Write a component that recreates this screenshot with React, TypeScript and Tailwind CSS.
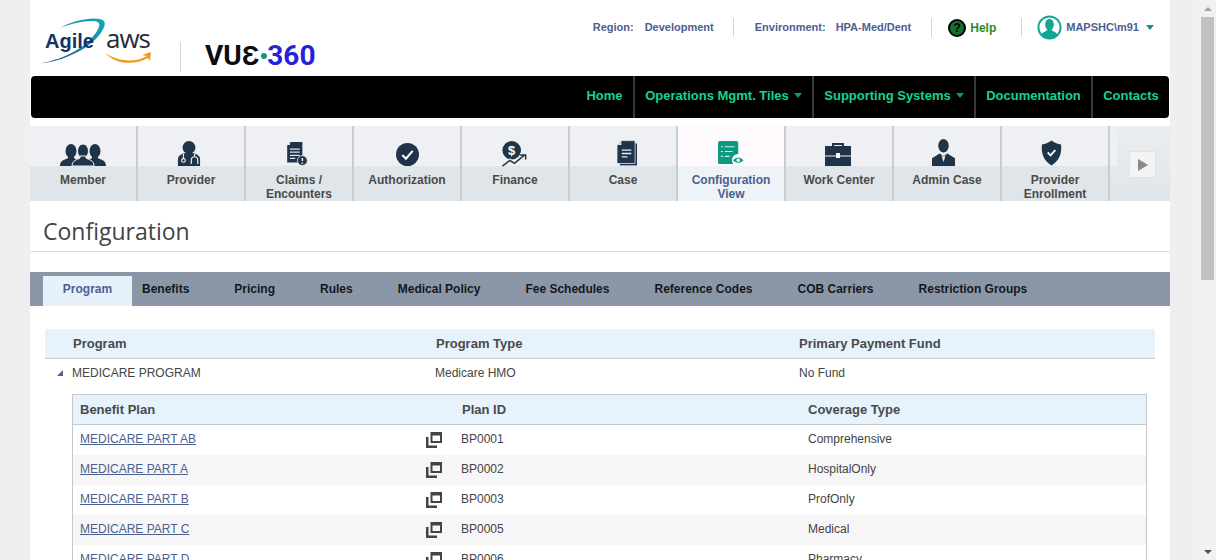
const ARIAL = "font-['Liberation_Sans',Arial,sans-serif]";

function MemberIcon() {
  const person = (x: number, s: number) => (
    <g transform={`translate(${x} 0) scale(${s})`}>
      <ellipse cx="0" cy="7" rx="5.5" ry="7" />
      <path d="M-3 12 L-3 14 C-6 16 -11 16 -11 22 L11 22 C11 16 6 16 3 14 L3 12 Z" />
    </g>
  );
  return (
    <svg width="46" height="22" viewBox="0 0 46 22" fill="#1f3349">
      {person(11, 1)}
      {person(35, 1)}
      <g stroke="#eef0f3" strokeWidth="1">{person(23, 1)}</g>
    </svg>
  );
}

function ProviderIcon() {
  return (
    <svg width="24" height="25" viewBox="0 0 26 27">
      <circle cx="13" cy="7" r="7" fill="#1f3349" />
      <path d="M1 27 V20 C1 15 6 13 13 13 C20 13 25 15 25 20 V27 Z" fill="#1f3349" />
      <circle cx="7" cy="21" r="2" fill="none" stroke="#eef0f3" strokeWidth="1.3" />
      <path d="M7 19 V14 M19 14 V17 M15.5 25 V20.5 A3.5 3.5 0 0 1 22.5 20.5 V25" fill="none" stroke="#eef0f3" strokeWidth="1.3" />
    </svg>
  );
}

function ClaimsIcon() {
  return (
    <svg width="22" height="25" viewBox="0 0 24 28">
      <path d="M5 1 H18 V24 H1 V5 Z" fill="#1f3349" />
      <path d="M4 4.5 H1.5 L4.5 1.5 Z" fill="#eef0f3" />
      <path d="M4 9 H15 M4 12.5 H15 M4 16 H15 M4 19.5 H10" stroke="#dfe6ea" strokeWidth="1.4" />
      <circle cx="18" cy="22" r="5.5" fill="#1f3349" stroke="#dfe6ea" />
      <path d="M18 19 V22.5 M18 24 V25.5" stroke="#fff" strokeWidth="1.6" />
    </svg>
  );
}

function AuthIcon() {
  return (
    <svg width="23" height="23" viewBox="0 0 22 22">
      <circle cx="11" cy="11" r="11" fill="#1f3349" />
      <path d="M6 11.5 L9.5 15 L16 7.5" fill="none" stroke="#fff" strokeWidth="2" />
    </svg>
  );
}

function FinanceIcon() {
  return (
    <svg width="27" height="26" viewBox="0 0 28 28" className="-mb-px">
      <circle cx="11" cy="10" r="10" fill="#1f3349" />
      <text x="11" y="15" textAnchor="middle" fontSize="14" fontWeight="700" fill="#fff" fontFamily="Liberation Sans">$</text>
      <path d="M1 27 L9 21 L14 24 L25 15 M20 15 H26 V20" fill="none" stroke="#eef0f3" strokeWidth="4" />
      <path d="M1 27 L9 21 L14 24 L25 15 M20 15 H26 V20" fill="none" stroke="#1f3349" strokeWidth="1.6" />
    </svg>
  );
}

function CaseIcon() {
  return (
    <svg width="20" height="26" viewBox="0 0 21 26">
      <path d="M3 3 H21 V26 H3 Z" fill="#1f3349" />
      <path d="M5 0 H19 V24 H0 V5 Z" fill="#1f3349" stroke="#eef0f3" strokeWidth="0.8" />
      <path d="M4.5 4.5 H1 L4.5 1 Z" fill="#eef0f3" />
      <path d="M5 10 H15 M5 13.5 H15 M5 17 H11" stroke="#e8edf0" strokeWidth="1.4" />
    </svg>
  );
}

function ConfigIcon() {
  return (
    <svg width="27" height="25" viewBox="0 0 28 26">
      <rect x="0" y="0" width="21" height="24" rx="2" fill="#0b9a7f" />
      <path d="M3 6 H5 M7 6 H17 M3 11 H5 M7 11 H15 M3 16 H5 M7 16 H12" stroke="#d7f0ea" strokeWidth="1.1" />
      <circle cx="21" cy="20" r="6.5" fill="#fdf9fd" />
      <path d="M15.5 20 Q21 14.5 26.5 20 Q21 25.5 15.5 20 Z" fill="#0b9a7f" />
      <circle cx="21" cy="20" r="1.8" fill="#fff" />
    </svg>
  );
}

function WorkIcon() {
  return (
    <svg width="26" height="24" viewBox="0 0 26 24">
      <path d="M8 5 V2 H18 V5" fill="none" stroke="#1f3349" strokeWidth="2" />
      <rect x="0" y="4" width="26" height="9.5" fill="#1f3349" />
      <rect x="0" y="14.5" width="26" height="9.5" fill="#1f3349" />
      <rect x="11" y="11" width="4" height="5" fill="#fff" />
    </svg>
  );
}

function AdminIcon() {
  return (
    <svg width="23" height="27" viewBox="0 0 24 28">
      <ellipse cx="12" cy="7" rx="5.5" ry="7" fill="#1f3349" />
      <path d="M8 15 L0 20 V28 H24 V20 L16 15 L12 18 Z" fill="#1f3349" />
      <path d="M10 16.5 L12 18.5 L14 16.5 L13 21 L12 24 L11 21 Z" fill="#eef0f3" />
    </svg>
  );
}

function ShieldIcon() {
  return (
    <svg width="21" height="26" viewBox="0 0 22 26">
      <path d="M11 0 C14 2.5 18 4 21 4 C22 14 19 21 11 26 C3 21 0 14 1 4 C4 4 8 2.5 11 0 Z" fill="#1f3349" />
      <path d="M7 12.5 L10 15.5 L15 10" fill="none" stroke="#fff" strokeWidth="2" />
    </svg>
  );
}

function CopyIcon() {
  return (
    <svg width="16" height="16" viewBox="0 0 16 16" className="mt-[2px] shrink-0">
      <path d="M4.5 0 H16 V11 H4.5 Z M6.5 3.5 V9 H14 V3.5 Z" fill="#444" fillRule="evenodd" />
      <path d="M0 5 H2.5 V13.5 H11 V16 H0 Z" fill="#444" />
    </svg>
  );
}

const tiles = [
  { label: "Member", icon: <MemberIcon />, shift: "" },
  { label: "Provider", icon: <ProviderIcon />, shift: "pr-[4px]" },
  { label: "Claims / Encounters", icon: <ClaimsIcon />, shift: "pr-[4px]" },
  { label: "Authorization", icon: <AuthIcon />, shift: "" },
  { label: "Finance", icon: <FinanceIcon />, shift: "pr-[2px]" },
  { label: "Case", icon: <CaseIcon />, shift: "pl-[7px]" },
  { label: "Configuration View", icon: <ConfigIcon />, shift: "", active: true },
  { label: "Work Center", icon: <WorkIcon />, shift: "pr-[2px]" },
  { label: "Admin Case", icon: <AdminIcon />, shift: "pr-[7px]" },
  { label: "Provider Enrollment", icon: <ShieldIcon />, shift: "pr-[7px]" },
];

const tabs = [
  "Benefits",
  "Pricing",
  "Rules",
  "Medical Policy",
  "Fee Schedules",
  "Reference Codes",
  "COB Carriers",
  "Restriction Groups",
];

const plans = [
  ["MEDICARE PART AB", "BP0001", "Comprehensive"],
  ["MEDICARE PART A", "BP0002", "HospitalOnly"],
  ["MEDICARE PART B", "BP0003", "ProfOnly"],
  ["MEDICARE PART C", "BP0005", "Medical"],
  ["MEDICARE PART D", "BP0006", "Pharmacy"],
];

function Caret({ color }: { color: string }) {
  return (
    <svg width="8" height="5" viewBox="0 0 8 5" className="shrink-0">
      <path d="M0 0 H8 L4 5 Z" fill={color} />
    </svg>
  );
}

function Header() {
  return (
    <div className="flex h-[76px] items-start">
      <div className="relative ml-[10px] mt-[18px] h-[48px] w-[112px] shrink-0">
        <svg width="68" height="46" viewBox="0 0 68 46" className="absolute left-0 top-0">
          <defs>
            <linearGradient id="swoosh" x1="0" y1="1" x2="1" y2="0">
              <stop offset="0" stopColor="#12447a" />
              <stop offset="0.6" stopColor="#128fa8" />
              <stop offset="1" stopColor="#12a8b8" />
            </linearGradient>
          </defs>
          <path d="M20 10 C32 3 50 -1 60 1 C66 2 66 7 62 13 C54 27 30 42 0 45.5 C26 41 48 28 57 13 C61 6 60 3 52 3 C42 3 30 6 20 10 Z" fill="url(#swoosh)" />
        </svg>
        <span className="absolute left-[5px] top-[11px] text-[20px] font-bold leading-6 text-[#15316b]">Agile</span>
        <span className="absolute left-[66px] top-[8px] font-['Open_Sans',sans-serif] text-[26px] leading-6 tracking-[-1px] text-[#2b2b33]">aws</span>
        <svg width="46" height="12" viewBox="0 0 46 12" className="absolute left-[65px] top-[34px]">
          <path d="M0 1 C10 8 28 12 42 4 L37 3 L46 0 L45 9 L43 6 C28 14 10 12 0 1 Z" fill="#f4991d" />
        </svg>
      </div>
      <div className="ml-[28px] mt-[42px] h-[30px] w-px bg-[#d4d4d4]" />
      <div className="ml-[24px] mt-[40px] flex items-center font-['Roboto',sans-serif] text-[28px] font-bold leading-8">
        <span className="text-[#0b0b10]">VU&#x190;</span>
        <span className="ml-[2px] size-[6px] rounded-full bg-[#12957f]" />
        <span className="text-[#2323d8]">360</span>
      </div>
      <div className="ml-auto mr-[16px] mt-[15px] flex items-center text-[11px] font-bold text-[#4c6090]">
        <span>Region:</span>
        <span className="ml-[11px]">Development</span>
        <div className="ml-[19px] h-[19px] w-px bg-[#d4d4d4]" />
        <span className="ml-[21px]">Environment:</span>
        <span className="ml-[10px]">HPA-Med/Dent</span>
        <div className="ml-[20px] h-[19px] w-px bg-[#d4d4d4]" />
        <div className="ml-[16px] flex size-[18px] items-center justify-center rounded-full border-2 border-black bg-[#13702d] text-[12px] text-black">?</div>
        <span className="ml-[4px] text-[12px] text-[#2a8a25]">Help</span>
        <div className="ml-[25px] h-[19px] w-px bg-[#d4d4d4]" />
        <svg width="25" height="25" viewBox="0 0 26 26" className="ml-[15px]">
          <circle cx="13" cy="13" r="11.5" fill="#fff" stroke="#12a594" strokeWidth="2" />
          <ellipse cx="13" cy="10" rx="4.5" ry="6" fill="#12a594" />
          <path d="M4.5 21 C6 17 10 17 11 15 H15 C16 17 20 17 21.5 21 C17 25 9 25 4.5 21 Z" fill="#12a594" />
        </svg>
        <span className="ml-[4px] text-[#4c6090]">MAPSHC\m91</span>
        <span className="ml-[7px]"><Caret color="#12957f" /></span>
      </div>
    </div>
  );
}

function NavBar() {
  const items = [
    { label: "Home", width: "w-[57px]" },
    { label: "Operations Mgmt. Tiles", caret: true, width: "w-[179px]" },
    { label: "Supporting Systems", caret: true, width: "w-[162px]" },
    { label: "Documentation", width: "w-[117px]" },
    { label: "Contacts", width: "w-[78px]" },
  ];
  return (
    <div className="ml-px mr-px flex h-[42px] items-stretch justify-end rounded-[4px] bg-black">
      {items.map((item, i) => (
        <div
          key={item.label}
          className={`flex items-center justify-center gap-[5px] pb-[3px] text-[13px] font-bold text-[#12d58c] ${item.width} ${i > 0 ? "border-l-2 border-[#3a3a3a]" : ""}`}
        >
          {item.label}
          {item.caret && <Caret color="#0f9c6b" />}
        </div>
      ))}
    </div>
  );
}

function TileRow() {
  return (
    <div className="mt-[8px] flex h-[75px] bg-[#dfe5e9]">
      {tiles.map((tile) => (
        <div
          key={tile.label}
          className={`relative flex shrink-0 flex-col items-center border-r-2 border-[#c9cdd0] ${tile.active ? "-ml-[2px] w-[110px] border-l-2 bg-[#eef3f7]" : "w-[108px]"}`}
        >
          <div className={`flex h-[40px] w-full items-end justify-center ${tile.shift} ${tile.active ? "bg-[#fdf9fd]" : "bg-[#eef0f3]"}`}>
            {tile.icon}
          </div>
          <div className={`mt-[8px] w-[100px] text-center text-[12px] font-bold leading-[13.5px] ${tile.active ? "text-[#4c6090]" : "text-[#4a4a4a]"}`}>
            {tile.label}
          </div>
        </div>
      ))}
      <div className="relative flex flex-1 items-start bg-linear-to-b from-[#ebeef0] to-[#dfe5e9]">
        <div className="h-[40px] w-[7px] bg-[#eef0f3]" />
        <div className="absolute left-[19px] top-[25px] flex size-[27px] items-center justify-center border border-[#dfe3e6] bg-[#f3f3f3]">
          <svg width="10" height="12" viewBox="0 0 10 12"><path d="M0 0 L10 6 L0 12 Z" fill="#8a8a8a" /></svg>
        </div>
      </div>
    </div>
  );
}

function Tabs() {
  return (
    <div className="mt-[20px] flex h-[34px] items-end bg-[#8b97a6] pl-[13px]">
      <div className="flex h-[30px] w-[89px] items-center justify-center bg-[#e6f1fb] pb-[5px] text-[12px] font-bold text-[#4c6090]">
        Program
      </div>
      <div className="ml-[10px] flex h-[30px] items-center gap-[45px] pb-[5px] text-[12px] font-bold whitespace-nowrap text-[#14171c]">
        {tabs.map((tab) => (
          <span key={tab}>{tab}</span>
        ))}
      </div>
    </div>
  );
}

function ProgramTable() {
  return (
    <div className="mx-[15px] mt-[23px]">
      <div className="flex h-[30px] items-center border-b border-[#c9ccd0] bg-[#e6f2fc] text-[13px] font-bold text-[#4a4a4a]">
        <span className="ml-[28px] w-[363px]">Program</span>
        <span className="w-[363px]">Program Type</span>
        <span>Primary Payment Fund</span>
      </div>
      <div className="flex h-[28px] items-center text-[12px] text-[#444]">
        <svg width="6" height="6" viewBox="0 0 6 6" className="ml-[12px]"><path d="M6 0 V6 H0 Z" fill="#4c6090" /></svg>
        <span className="ml-[9px] w-[363px]">MEDICARE PROGRAM</span>
        <span className="w-[364px]">Medicare HMO</span>
        <span>No Fund</span>
      </div>
      <div className="ml-[27px] mr-[8px] mt-[7px] border-x border-t border-[#c3c9d0]">
        <div className="flex h-[30px] items-center border-b border-[#c3c9d0] bg-[#e6f2fc] text-[13px] font-bold text-[#4a4a4a]">
          <span className="ml-[7px] w-[382px]">Benefit Plan</span>
          <span className="w-[346px]">Plan ID</span>
          <span>Coverage Type</span>
        </div>
        {plans.map((plan, i) => (
          <div key={plan[0]} className={`flex h-[30px] items-center pb-[2px] text-[12px] text-[#444] ${i % 2 ? "bg-[#f6f6f6]" : "bg-white"}`}>
            <a className="ml-[7px] w-[346px] text-[#4c6090] underline">{plan[0]}</a>
            <CopyIcon />
            <span className="ml-[19px] w-[347px]">{plan[1]}</span>
            <span>{plan[2]}</span>
          </div>
        ))}
      </div>
    </div>
  );
}

function Scrollbar() {
  return (
    <div className="flex w-[17px] shrink-0 flex-col items-center bg-[#f1f1f1]">
      <div className="flex h-[17px] items-center justify-center">
        <svg width="8" height="4" viewBox="0 0 8 4"><path d="M4 0 L8 4 H0 Z" fill="#a3a3a3" /></svg>
      </div>
      <div className="h-[263px] w-[13px] bg-[#c1c1c1]" />
      <div className="mt-auto flex h-[17px] items-center justify-center">
        <svg width="8" height="4" viewBox="0 0 8 4"><path d="M0 0 H8 L4 4 Z" fill="#505050" /></svg>
      </div>
    </div>
  );
}

export default function App() {
  return (
    <div className={`flex h-[560px] w-[1216px] overflow-hidden bg-[#f0efef] ${ARIAL}`}>
      <div className="ml-[30px] h-full w-[1140px] shrink-0 overflow-hidden bg-white">
        <Header />
        <NavBar />
        <TileRow />
        <div className="flex h-[51px] items-center border-b border-[#dcdcdc] pl-[13px] pt-[10px] font-['Open_Sans',sans-serif] text-[23px] text-[#444]">
          Configuration
        </div>
        <Tabs />
        <ProgramTable />
      </div>
      <div className="flex-1" />
      <Scrollbar />
    </div>
  );
}
